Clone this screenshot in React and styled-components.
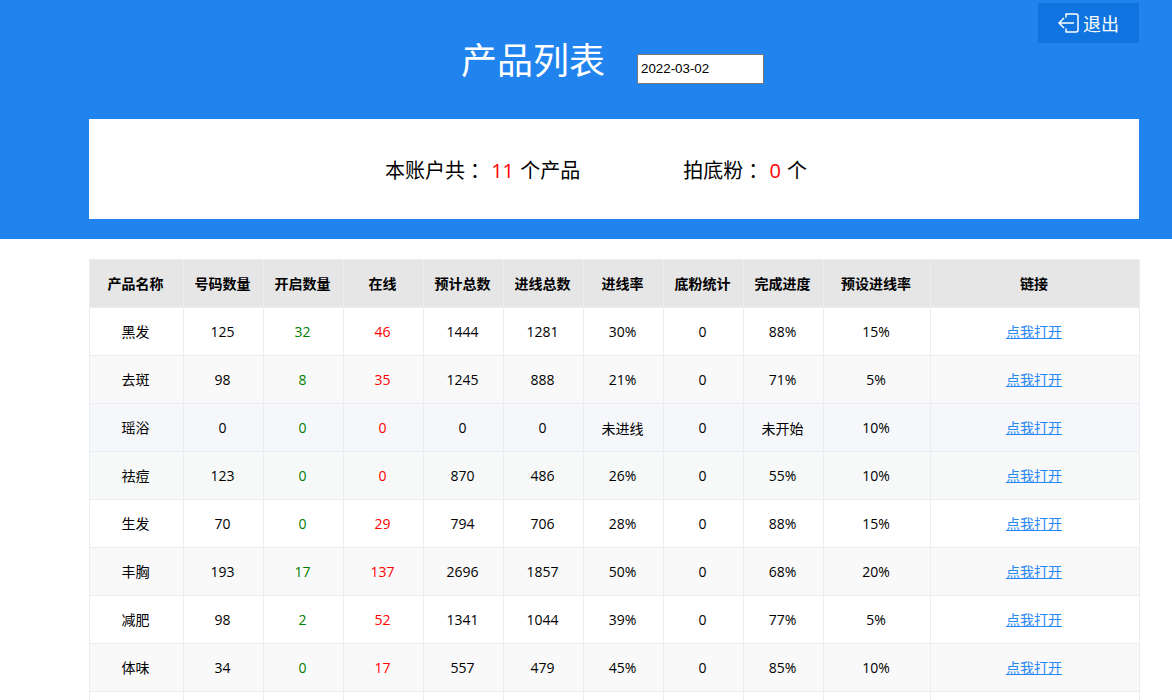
import React from 'react'
import styled, { createGlobalStyle } from 'styled-components'

const GlobalStyle = createGlobalStyle`
  html, body {
    margin: 0;
    padding: 0;
    height: 700px;
    overflow: hidden;
    background: #fff;
    font-family: "Open Sans", "Noto Sans CJK SC", sans-serif;
    color: #000;
  }
`

const Header = styled.header`
  position: relative;
  height: 239px;
  background: #2183ee;
  box-sizing: border-box;
  padding: 0 33px 20px 89px;
  display: flex;
  flex-direction: column;
  justify-content: flex-end;
`

const LogoutButton = styled.a`
  position: absolute;
  top: 3px;
  right: 33px;
  width: 101px;
  height: 40px;
  background: #1074e0;
  color: #fff;
  font-size: 18px;
  display: flex;
  align-items: center;
  justify-content: center;
  gap: 4px;
  cursor: pointer;
`

const TitleRow = styled.div`
  display: flex;
  align-items: center;
  justify-content: center;
  gap: 32px;
  height: 62px;
  margin-bottom: 26px;
  padding-right: 3px;
`

const Title = styled.h1`
  margin: 0 0 2px;
  font-size: 36px;
  font-weight: 400;
  line-height: 50px;
  color: #fff;
`

const DateInput = styled.input`
  width: 127px;
  height: 30px;
  box-sizing: border-box;
  margin-top: 13px;
  padding: 0 2px 0 3px;
  border: 1px solid #767676;
  background: #fff;
  font-family: "Liberation Sans", sans-serif;
  font-size: 13.33px;
  color: #000;
  outline: none;
`

const Summary = styled.div`
  height: 100px;
  box-sizing: border-box;
  background: #fff;
  display: flex;
  align-items: center;
  justify-content: center;
  gap: 103px;
  padding: 2px 36px 0 0;
  font-size: 20px;
`

const Stat = styled.span`
  white-space: pre;
`

const Colon = styled.span`
  font-family: "Noto Sans CJK TC", sans-serif;
  vertical-align: -1px;
`

const Count = styled.em`
  font-style: normal;
  margin: 0 1px;
  color: #f00;
`

const Main = styled.main`
  padding: 20px 33px 0 89px;
`

const Table = styled.table`
  width: 1050px;
  table-layout: fixed;
  border-collapse: collapse;
  font-size: 14px;
`

const HeadCell = styled.th`
  height: 48px;
  padding: 0 2px 1px 0;
  box-sizing: border-box;
  background: #e6e6e6;
  border: 1px solid #ebedf2;
  font-size: 14px;
  font-weight: 700;
  text-align: center;
`

const Row = styled.tr`
  background: ${(p) => p.$bg};
`

const Cell = styled.td`
  height: 48px;
  padding: 0 2px 0 0;
  box-sizing: border-box;
  border: 1px solid #ebedf2;
  text-align: center;
  color: ${(p) => p.$color || '#000'};
`

const NameCell = styled(Cell)`
  padding-bottom: 2px;
`

const OpenLink = styled.a`
  position: relative;
  top: -1px;
  color: #2a88f2;
  font-size: 14px;
  text-decoration: underline;
  cursor: pointer;
`

const columns = [
  { title: '产品名称', width: 94 },
  { title: '号码数量', width: 80 },
  { title: '开启数量', width: 80 },
  { title: '在线', width: 80 },
  { title: '预计总数', width: 80 },
  { title: '进线总数', width: 80 },
  { title: '进线率', width: 80 },
  { title: '底粉统计', width: 80 },
  { title: '完成进度', width: 80 },
  { title: '预设进线率', width: 107 },
  { title: '链接', width: 209 },
]

const products = [
  ['黑发', 125, 32, 46, 1444, 1281, '30%', 0, '88%', '15%', '#ffffff'],
  ['去斑', 98, 8, 35, 1245, 888, '21%', 0, '71%', '5%', '#f9f9f9'],
  ['瑶浴', 0, 0, 0, 0, 0, '未进线', 0, '未开始', '10%', '#f6f7fb'],
  ['祛痘', 123, 0, 0, 870, 486, '26%', 0, '55%', '10%', '#f7f9f8'],
  ['生发', 70, 0, 29, 794, 706, '28%', 0, '88%', '15%', '#ffffff'],
  ['丰胸', 193, 17, 137, 2696, 1857, '50%', 0, '68%', '20%', '#f9f9f9'],
  ['减肥', 98, 2, 52, 1341, 1044, '39%', 0, '77%', '5%', '#ffffff'],
  ['体味', 34, 0, 17, 557, 479, '45%', 0, '85%', '10%', '#f9f9f9'],
  ['', '', '', '', '', '', '', '', '', '', '#ffffff'],
]

const LogoutIcon = () => (
  <svg width="21" height="20" viewBox="0 0 21 20" fill="none" stroke="#fff" strokeWidth="1.5">
    <path d="M8 4.500V1h10a2 2 0 0 1 2 2v14a2 2 0 0 1-2 2H8v-3.500" strokeLinejoin="round" />
    <path d="M16 10H1M6 5l-5 5 5 5" />
  </svg>
)

const App = () => {
  return (
    <>
      <GlobalStyle />
      <Header>
        <LogoutButton>
          <LogoutIcon />
          退出
        </LogoutButton>
        <TitleRow>
          <Title>产品列表</Title>
          <DateInput type="text" defaultValue="2022-03-02" />
        </TitleRow>
        <Summary>
          <Stat>
            本账户共<Colon>：</Colon> <Count>11</Count> 个产品
          </Stat>
          <Stat>
            拍底粉<Colon>：</Colon> <Count>0</Count> 个
          </Stat>
        </Summary>
      </Header>
      <Main>
        <Table>
          <colgroup>
            {columns.map((c) => (
              <col key={c.title} width={c.width} />
            ))}
          </colgroup>
          <thead>
            <tr>
              {columns.map((c) => (
                <HeadCell key={c.title}>{c.title}</HeadCell>
              ))}
            </tr>
          </thead>
          <tbody>
            {products.map((p, i) => (
              <Row key={i} $bg={p[10]}>
                <NameCell>{p[0]}</NameCell>
                <Cell>{p[1]}</Cell>
                <Cell $color="#008000">{p[2]}</Cell>
                <Cell $color="#f00">{p[3]}</Cell>
                <Cell>{p[4]}</Cell>
                <Cell>{p[5]}</Cell>
                <Cell>{p[6]}</Cell>
                <Cell>{p[7]}</Cell>
                <Cell>{p[8]}</Cell>
                <Cell>{p[9]}</Cell>
                <Cell>{p[0] && <OpenLink>点我打开</OpenLink>}</Cell>
              </Row>
            ))}
          </tbody>
        </Table>
      </Main>
    </>
  )
}

export default App
